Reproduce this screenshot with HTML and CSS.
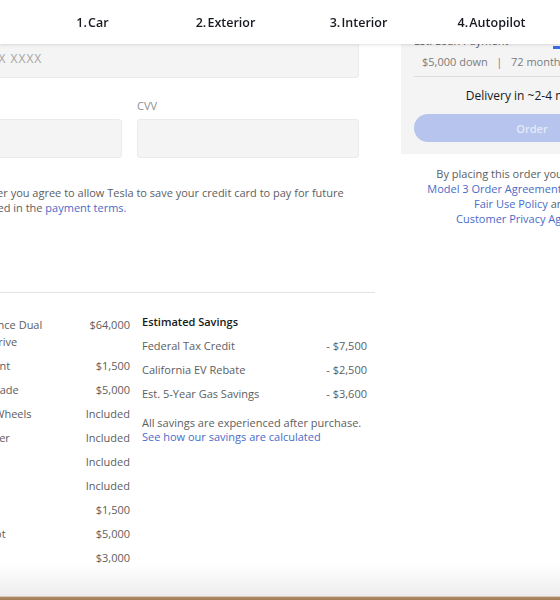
FILE: index.html
```html
<!DOCTYPE html>
<html lang="en">
<head>
    <meta charset="UTF-8">
    <meta name="viewport" content="width=device-width, initial-scale=1.0">
    <title>Model 3 - Payment</title>
    <link rel="stylesheet" href="styles.css">
</head>
<body>
    <header class="steps">
        <span class="step">1. Car</span>
        <span class="step">2. Exterior</span>
        <span class="step">3. Interior</span>
        <span class="step">4. Autopilot</span>
    </header>

    <main class="checkout">
        <section class="payment">
            <div class="card-form">
                <input class="field card-number" type="text" placeholder="XXXX XXXX XXXX XXXX">
                <div class="field-row">
                    <label class="field-group">
                        <span class="field-label">Expiration Date</span>
                        <input class="field" type="text">
                    </label>
                    <label class="field-group">
                        <span class="field-label">CVV</span>
                        <input class="field" type="text">
                    </label>
                </div>
                <p class="note">By placing this order you agree to allow Tesla to save your credit card to pay for future charges as described in the <a href="#">payment terms.</a></p>
            </div>

            <div class="summary-table">
                <div class="price-list">
                    <div class="line"><span class="line-label">Model 3 Performance Dual Motor All-Wheel Drive</span><span class="line-value">$64,000</span></div>
                    <div class="line"><span class="line-label">Midnight Silver Paint</span><span class="line-value">$1,500</span></div>
                    <div class="line"><span class="line-label">Performance Upgrade</span><span class="line-value">$5,000</span></div>
                    <div class="line"><span class="line-label">20" Performance Wheels</span><span class="line-value">Included</span></div>
                    <div class="line"><span class="line-label">Carbon Fiber Spoiler</span><span class="line-value">Included</span></div>
                    <div class="line"><span class="line-label">Alloy Sport Pedals</span><span class="line-value">Included</span></div>
                    <div class="line"><span class="line-label">Premium</span><span class="line-value">Included</span></div>
                    <div class="line"><span class="line-label">Interior</span><span class="line-value">$1,500</span></div>
                    <div class="line"><span class="line-label">Enhanced Autopilot</span><span class="line-value">$5,000</span></div>
                    <div class="line"><span class="line-label">Self-Drive</span><span class="line-value">$3,000</span></div>
                </div>
                <div class="savings">
                    <h3 class="savings-title">Estimated Savings</h3>
                    <div class="line"><span>Federal Tax Credit</span><span>- $7,500</span></div>
                    <div class="line"><span>California EV Rebate</span><span>- $2,500</span></div>
                    <div class="line"><span>Est. 5-Year Gas Savings</span><span>- $3,600</span></div>
                    <p class="savings-note">All savings are experienced after purchase.<br><a href="#">See how our savings are calculated</a></p>
                </div>
            </div>
        </section>

        <aside class="order">
            <div class="order-panel">
                <div class="loan-row">
                    <span>Est. Loan Payment</span>
                    <span class="loan-tab">Loan</span>
                </div>
                <div class="loan-terms">$5,000 down &nbsp; | &nbsp; 72 months &nbsp; | &nbsp; 4.49% APR</div>
                <div class="delivery">Delivery in ~2-4 months</div>
                <button class="order-button" disabled>Order</button>
            </div>
            <p class="legal">
                By placing this order you agree to the<br>
                <a href="#">Model 3 Order Agreement</a>, Supercharger<br>
                <a href="#">Fair Use Policy</a> and the<br>
                <a href="#">Customer Privacy Agreement</a>.
            </p>
        </aside>
    </main>

    <div class="window-edge"></div>
</body>
</html>
```

FILE: styles.css
```css
body {
    font-family: "Open Sans", Arial, sans-serif;
    margin: 0;
    padding: 0;
    background-color: #fff;
    color: #5c5e62;
    font-size: 11px;
    overflow: hidden;
    height: 100vh;
}
a {
    color: #4a6bc9;
    text-decoration: none;
}

.steps {
    position: fixed;
    top: 0;
    left: 0;
    right: 0;
    z-index: 10;
    height: 44px;
    padding-left: 26px;
    display: flex;
    align-items: center;
    background-color: #fff;
    box-shadow: 0 1px 3px rgba(0, 0, 0, 0.12);
}
.step {
    width: 133px;
    text-align: center;
    font-size: 12.5px;
    font-weight: 600;
    color: #171a20;
    word-spacing: -2px;
}

.checkout {
    display: flex;
    margin-left: -100px;
    padding-top: 38px;
}
.payment {
    width: 475px;
    flex-shrink: 0;
}
.card-form {
    width: 459px;
}
.field {
    display: block;
    width: 100%;
    height: 40px;
    box-sizing: border-box;
    padding: 0 14px;
    border: 1px solid #ebebeb;
    border-radius: 3px;
    background-color: #f4f4f4;
    font-family: inherit;
    font-size: 12px;
}
.card-number {
    padding-left: 2px;
    letter-spacing: 1px;
}
.field::placeholder {
    color: #a5a5a5;
}
.field-row {
    display: grid;
    grid-template-columns: 1fr 1fr;
    column-gap: 15px;
    margin-top: 20px;
}
.field-row .field {
    height: 39px;
}
.field-label {
    display: block;
    line-height: 15px;
    margin-bottom: 6px;
    color: #8e8e8e;
}
.note {
    margin: 27px 0 0;
    padding-left: 3px;
    line-height: 15px;
}

.summary-table {
    display: grid;
    grid-template-columns: 225px 225px;
    column-gap: 12px;
    margin-top: 77px;
    padding: 19px 0 0 5px;
    border-top: 1px solid #e2e2e2;
}
.line {
    display: flex;
    justify-content: space-between;
    align-items: flex-start;
    padding: 3.5px 0;
    line-height: 17px;
}
.line-label {
    max-width: 150px;
}
.line-value {
    text-align: right;
}
.savings {
    margin-top: -3px;
}
.savings-title {
    margin: 0;
    padding: 3.5px 0;
    line-height: 17px;
    font-size: 11px;
    font-weight: 600;
    color: #171a20;
}
.savings-note {
    margin: 11px 0 0;
    line-height: 14px;
}

.order {
    width: 262px;
    flex-shrink: 0;
    margin-left: 26px;
    margin-top: -5px;
}
.order-panel {
    background-color: #f4f4f4;
    padding: 0 13px 12px;
}
.loan-row {
    display: flex;
    justify-content: space-between;
    line-height: 16px;
    color: #5c5e62;
}
.loan-tab {
    width: 97px;
    line-height: 13px;
    text-align: center;
    border-bottom: 3px solid #3e6ae1;
}
.loan-terms {
    margin-top: 5px;
    padding: 0 0 6px 8px;
    line-height: 16px;
    color: #7a7c80;
    white-space: nowrap;
    border-bottom: 1px solid #dcdcdc;
}
.delivery {
    margin-top: 11px;
    line-height: 16px;
    text-align: center;
    font-size: 12px;
    color: #171a20;
}
.order-button {
    display: block;
    width: 100%;
    height: 28px;
    margin-top: 10px;
    border: none;
    border-radius: 14px;
    background-color: #b6c4ee;
    color: #e4eaf9;
    font-family: inherit;
    font-size: 11px;
    font-weight: 600;
}
.legal {
    margin: 12px 0 0;
    line-height: 15px;
    text-align: center;
}

.window-edge {
    position: fixed;
    left: 0;
    right: 0;
    bottom: 0;
    height: 36px;
    background: linear-gradient(to bottom, rgba(240, 240, 240, 0), #ededed 88%, #f6f6f6 89%, #b08a62 92%, #a07c58);
}
```
